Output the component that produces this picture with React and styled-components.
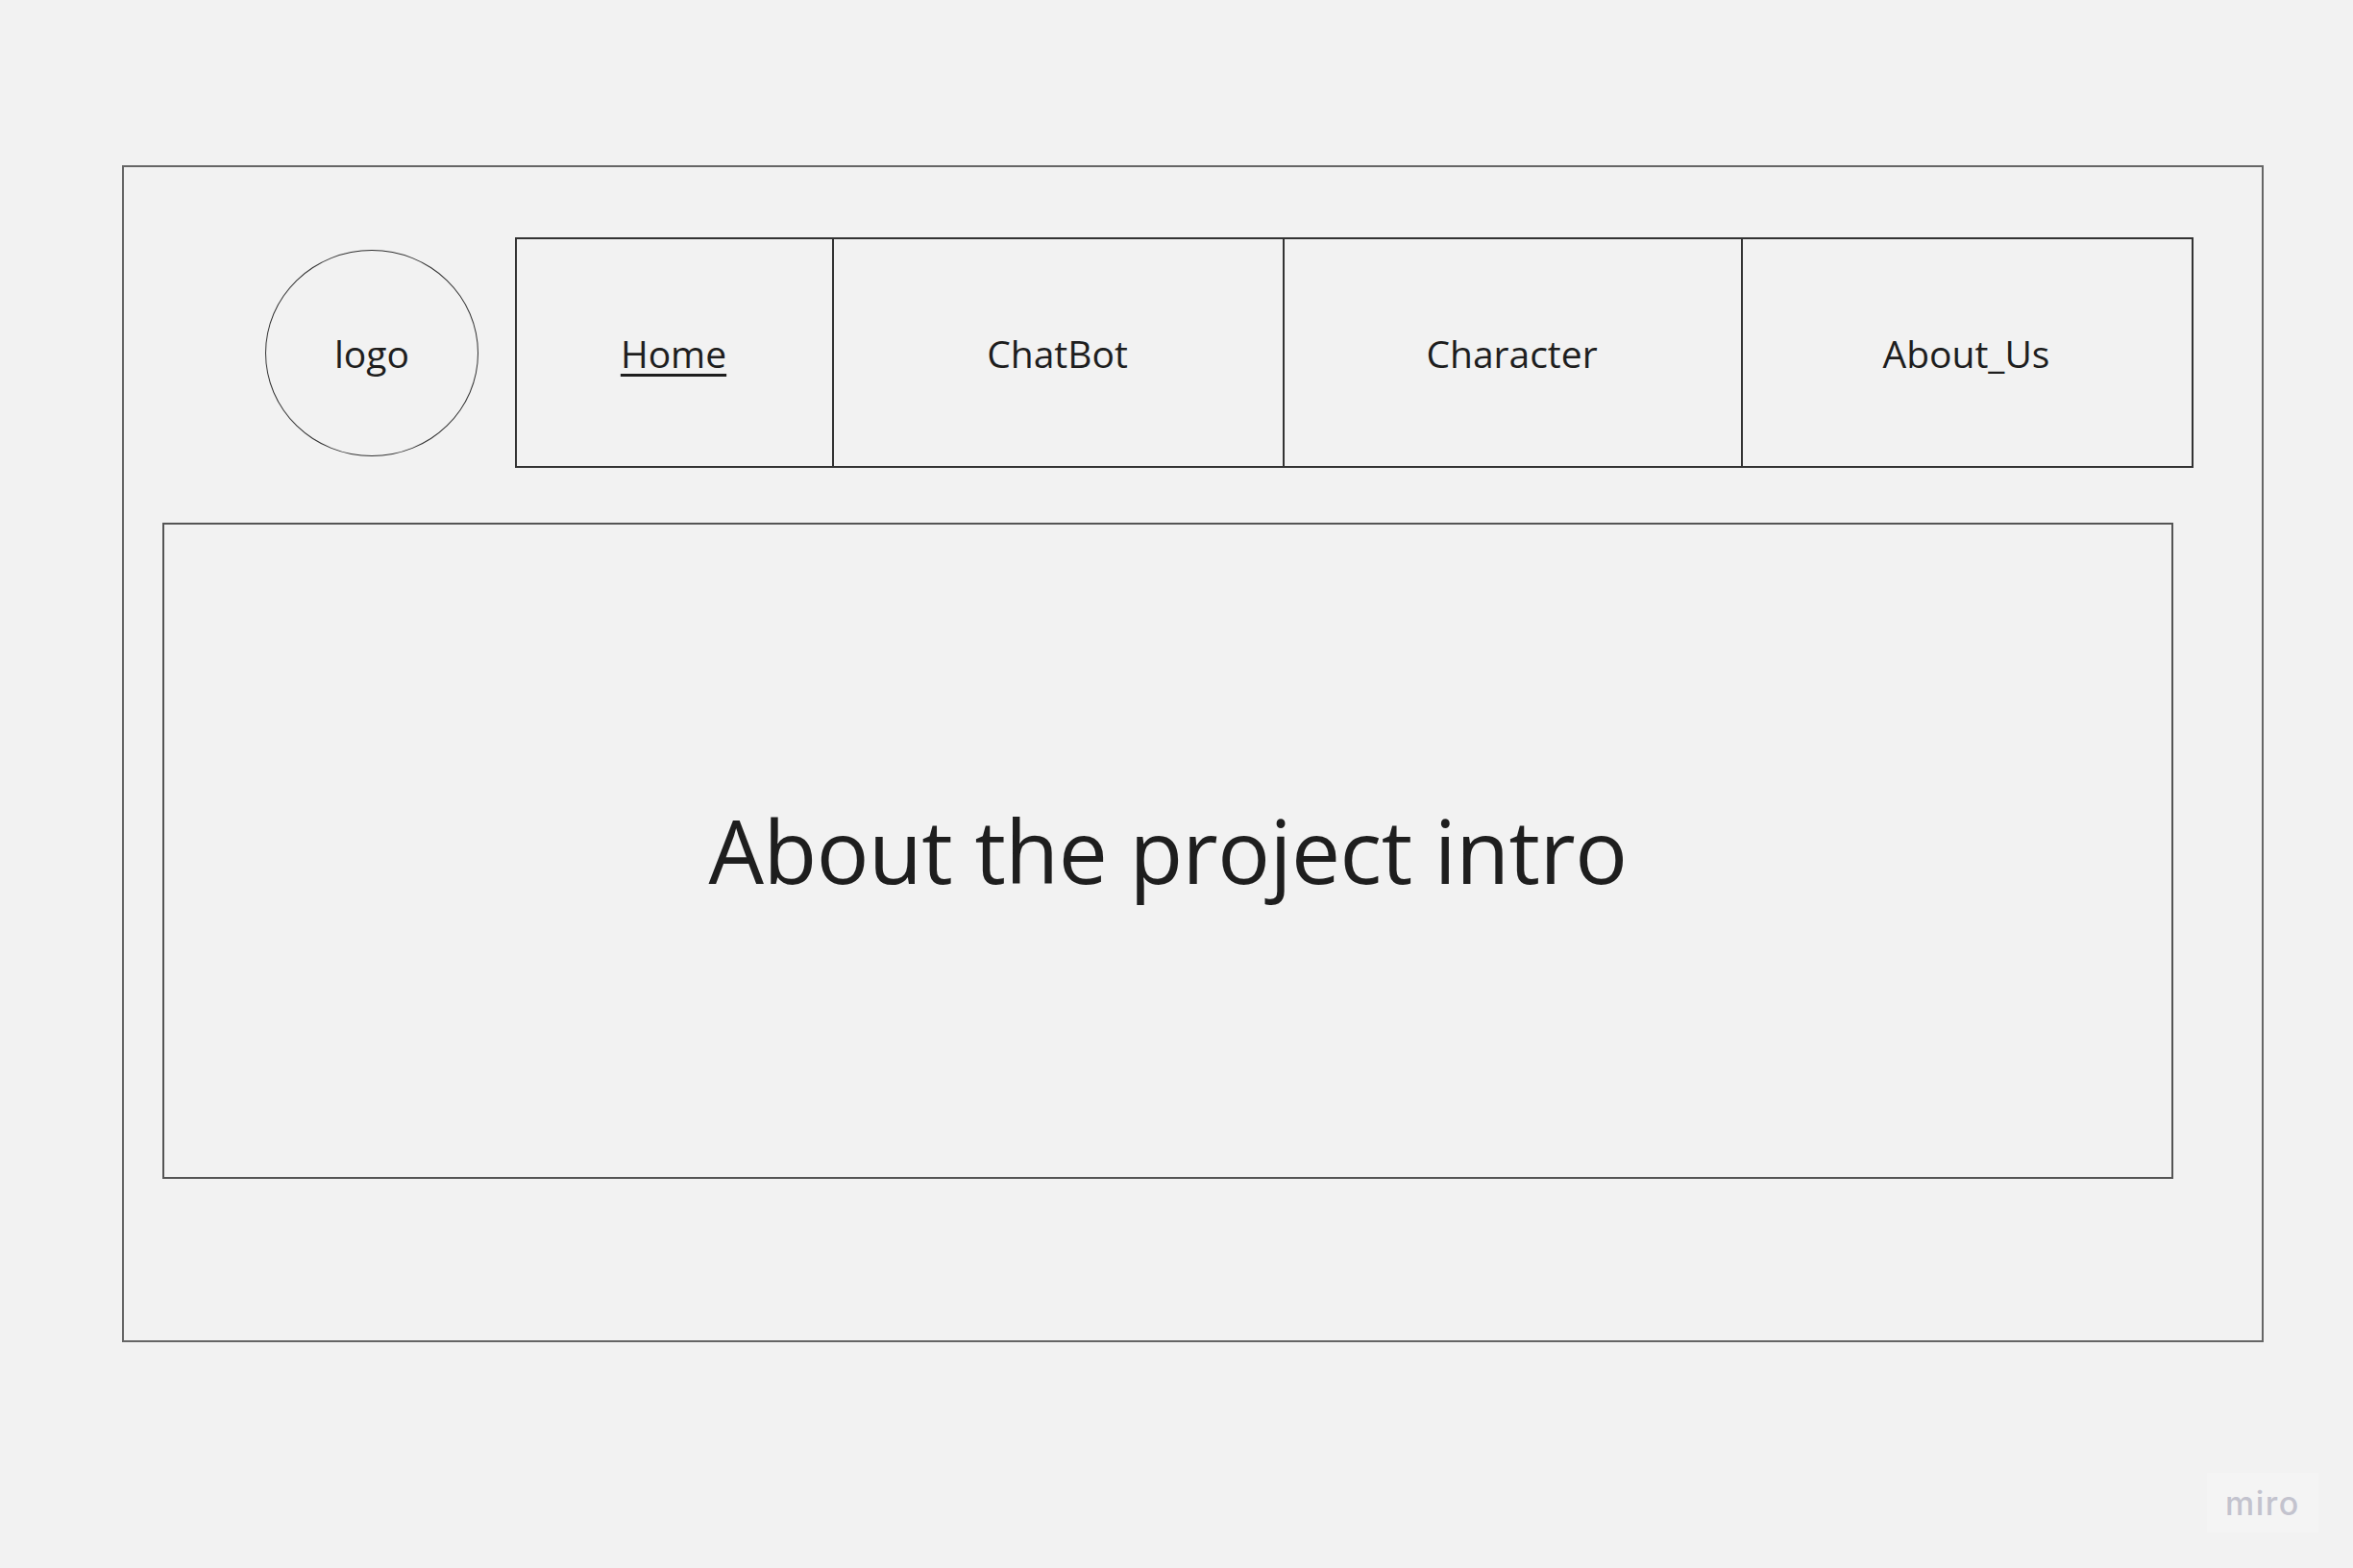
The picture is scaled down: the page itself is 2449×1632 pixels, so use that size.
import React from "react";
import styled, { createGlobalStyle } from "styled-components";

const GlobalStyle = createGlobalStyle`
  html, body {
    margin: 0;
    padding: 0;
    background-color: #f2f2f2;
  }
  body {
    font-family: "Open Sans", "Noto Sans", sans-serif;
    color: #1e1e1e;
  }
`;

const Canvas = styled.div`
  position: relative;
  width: 2449px;
  height: 1632px;
  padding: 172px 0 0 127px;
  box-sizing: border-box;
  background-color: #f2f2f2;
  overflow: hidden;
`;

const Frame = styled.div`
  width: 2229px;
  height: 1225px;
  box-sizing: border-box;
  border: 2px solid #666;
  display: flex;
  flex-direction: column;
`;

const Header = styled.header`
  display: flex;
  align-items: center;
  gap: 38px;
  margin: 73px 0 0 147px;
`;

const Logo = styled.div`
  width: 222px;
  height: 215px;
  box-sizing: border-box;
  border: 1.5px solid #333;
  border-radius: 50%;
  display: flex;
  align-items: center;
  justify-content: center;
  font-size: 39px;
`;

const NavBar = styled.nav`
  display: flex;
  height: 240px;
  box-sizing: border-box;
  border: 2px solid #333;
`;

const NavItem = styled.a`
  width: ${(p) => p.$w}px;
  box-sizing: border-box;
  border-left: ${(p) => (p.$first ? "none" : "2px solid #333")};
  display: flex;
  align-items: center;
  justify-content: center;
  padding-right: 2px;
  font-size: 39px;
  color: #1e1e1e;
  text-decoration: ${(p) => (p.$active ? "underline" : "none")};
  text-decoration-thickness: 3px;
  text-underline-offset: 6px;
`;

const Intro = styled.section`
  width: 2093px;
  height: 683px;
  box-sizing: border-box;
  margin: 57px 0 0 40px;
  border: 2px solid #555;
  display: flex;
  align-items: center;
  justify-content: center;
`;

const IntroTitle = styled.h1`
  margin: 0;
  font-size: 91px;
  font-weight: 400;
  line-height: 1;
  letter-spacing: -0.5px;
`;

const Watermark = styled.div`
  position: absolute;
  left: 2297px;
  top: 1533px;
  width: 116px;
  height: 62px;
  background-color: #f4f4f4;
  display: flex;
  align-items: center;
  justify-content: center;
  font-family: Inter, "Noto Sans", sans-serif;
  font-weight: 500;
  font-size: 34px;
  letter-spacing: 1.5px;
  color: #c3c3ce;
`;

const navLinks = [
  { label: "Home", width: 330, active: true },
  { label: "ChatBot", width: 469 },
  { label: "Character", width: 477 },
  { label: "About_Us", width: 469 },
];

const App = () => {
  return (
    <>
      <GlobalStyle />
      <Canvas>
        <Frame>
          <Header>
            <Logo>logo</Logo>
            <NavBar>
              {navLinks.map((link, i) => (
                <NavItem
                  key={link.label}
                  $w={link.width - (i === 0 ? 2 : 0)}
                  $first={i === 0}
                  $active={link.active}
                >
                  {link.label}
                </NavItem>
              ))}
            </NavBar>
          </Header>
          <Intro>
            <IntroTitle>About the project intro</IntroTitle>
          </Intro>
        </Frame>
        <Watermark>miro</Watermark>
      </Canvas>
    </>
  );
};

export default App;
